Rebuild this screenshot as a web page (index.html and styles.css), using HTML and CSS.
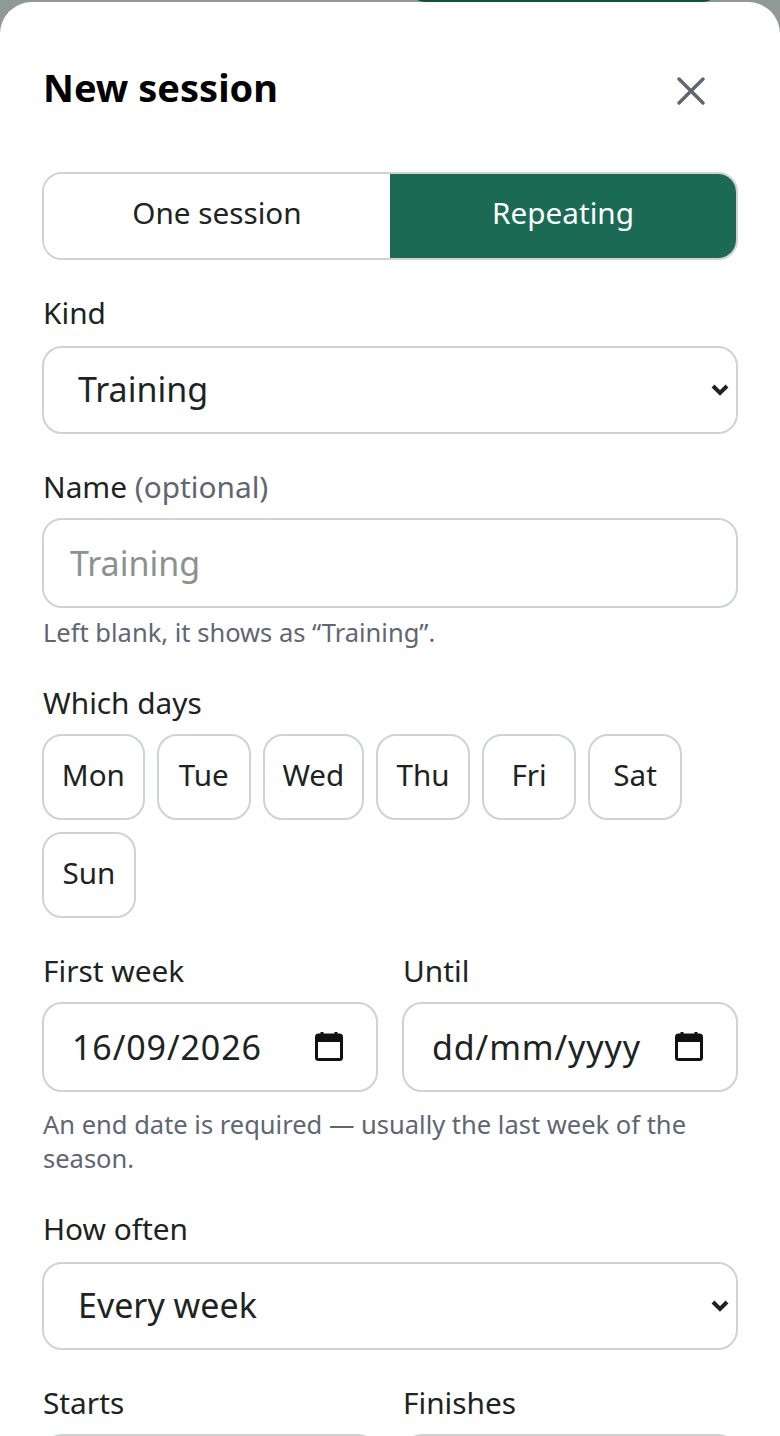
FILE: index.html
```html
<!DOCTYPE html>
<html lang="en">
<head>
    <meta charset="UTF-8">
    <meta name="viewport" content="width=device-width, initial-scale=1.0">
    <title>New session</title>
    <link rel="stylesheet" href="styles.css">
</head>
<body>
    <div class="backdrop">
        <div class="backdrop-btn"></div>
    </div>

    <div class="sheet">
        <div class="sheet-head">
            <h1>New session</h1>
            <button type="button" class="close-btn" aria-label="Close">
                <svg width="28" height="28" viewBox="0 0 28 28"><path d="M2 2 L26 26 M26 2 L2 26" fill="none" stroke="#5f6672" stroke-width="3.4" stroke-linecap="round"/></svg>
            </button>
        </div>

        <div class="segmented">
            <button type="button" class="seg">One session</button>
            <button type="button" class="seg seg-active">Repeating</button>
        </div>

        <div class="field field-kind">
            <label>Kind</label>
            <div class="select-wrap">
                <select class="control select">
                    <option>Training</option>
                </select>
                <svg class="chevron" width="18" height="14" viewBox="0 0 18 14"><path d="M2 3 L9 10 L16 3" fill="none" stroke="#1c2421" stroke-width="4"/></svg>
            </div>
        </div>

        <div class="field field-name">
            <label>Name <span class="muted">(optional)</span></label>
            <input type="text" class="control text-input" placeholder="Training">
            <p class="hint">Left blank, it shows as “Training”.</p>
        </div>

        <div class="field field-days">
            <label>Which days</label>
            <div class="days">
                <button type="button" class="day">Mon</button>
                <button type="button" class="day">Tue</button>
                <button type="button" class="day">Wed</button>
                <button type="button" class="day">Thu</button>
                <button type="button" class="day">Fri</button>
                <button type="button" class="day">Sat</button>
                <button type="button" class="day">Sun</button>
            </div>
        </div>

        <div class="two-col field-dates">
            <div class="field">
                <label>First week</label>
                <div class="date-wrap">
                    <input type="text" class="control date-input" value="16/09/2026">
                    <svg class="cal" width="28" height="30" viewBox="0 0 28 30"><path d="M7 1 V5 M21 1 V5" stroke="#111" stroke-width="3" fill="none"/><rect x="1.5" y="4" width="25" height="24.5" rx="2" fill="none" stroke="#111" stroke-width="3"/><rect x="1.5" y="4" width="25" height="7" fill="#111"/></svg>
                </div>
            </div>
            <div class="field">
                <label>Until</label>
                <div class="date-wrap">
                    <input type="text" class="control date-input" value="dd/mm/yyyy">
                    <svg class="cal" width="28" height="30" viewBox="0 0 28 30"><path d="M7 1 V5 M21 1 V5" stroke="#111" stroke-width="3" fill="none"/><rect x="1.5" y="4" width="25" height="24.5" rx="2" fill="none" stroke="#111" stroke-width="3"/><rect x="1.5" y="4" width="25" height="7" fill="#111"/></svg>
                </div>
            </div>
        </div>
        <p class="hint hint-dates">An end date is required — usually the last week of the season.</p>

        <div class="field field-often">
            <label>How often</label>
            <div class="select-wrap">
                <select class="control select">
                    <option>Every week</option>
                </select>
                <svg class="chevron" width="18" height="14" viewBox="0 0 18 14"><path d="M2 3 L9 10 L16 3" fill="none" stroke="#1c2421" stroke-width="4"/></svg>
            </div>
        </div>

        <div class="two-col field-times">
            <div class="field">
                <label>Starts</label>
                <input type="text" class="control time-input">
            </div>
            <div class="field">
                <label>Finishes</label>
                <input type="text" class="control time-input">
            </div>
        </div>
    </div>
</body>
</html>
```

FILE: styles.css
```css
* {
    margin: 0;
    padding: 0;
    box-sizing: border-box;
    font-family: 'Noto Sans', sans-serif;
}

html, body {
    height: 1436px;
    overflow: hidden;
}

body {
    background-color: #8f9a96;
    color: #1c2421;
    position: relative;
}

.backdrop {
    position: absolute;
    top: 0;
    left: 0;
    right: 0;
    height: 20px;
}

.backdrop-btn {
    position: absolute;
    top: -40px;
    left: 406px;
    width: 316px;
    height: 42px;
    border-radius: 20px;
    background-color: #13503c;
}

.sheet {
    position: relative;
    margin-top: 2px;
    height: 1434px;
    padding: 0 42px;
    background-color: #fff;
    border-radius: 32px 32px 0 0;
    overflow: hidden;
}

.sheet-head {
    display: flex;
    justify-content: space-between;
    align-items: center;
    height: 170px;
}

.sheet-head h1 {
    font-size: 38px;
    font-weight: 700;
    color: #000;
    margin-left: 1px;
}

.close-btn {
    background: none;
    border: none;
    margin-right: 33px;
    margin-top: 8px;
    display: flex;
}

.segmented {
    display: flex;
    height: 88px;
    border: 2px solid #cfd3d1;
    border-radius: 20px;
    overflow: hidden;
}

.seg {
    flex: 1;
    border: none;
    background: #fff;
    color: #1c2421;
    font-size: 29.7px;
    padding-bottom: 8px;
}

.seg-active {
    background-color: #1b6b54;
    color: #fff;
}

.field label {
    display: block;
    font-size: 29.8px;
    line-height: 40px;
    margin-bottom: 13px;
    margin-left: 1px;
}

.muted {
    color: #5f6672;
}

.control {
    display: block;
    width: 100%;
    border: 2px solid #cfd3d1;
    border-radius: 20px;
    background: #fff;
    color: #1c2421;
    outline: none;
}

.select-wrap,
.date-wrap {
    position: relative;
}

.select {
    appearance: none;
    height: 88px;
    padding-left: 34px;
    padding-bottom: 2px;
    font-size: 34px;
}

.chevron {
    position: absolute;
    right: 9px;
    top: 37px;
}

.text-input {
    height: 90px;
    padding-left: 26px;
    font-size: 34px;
}

.text-input::placeholder {
    color: #8b918e;
    opacity: 1;
}

.hint {
    font-size: 25.5px;
    line-height: 34px;
    color: #5f6672;
    margin-left: 1px;
}

.field-name .hint {
    margin-top: 7px;
}

.field-kind {
    margin-top: 33px;
}

.field-name {
    margin-top: 33px;
}

.field-name label {
    margin-bottom: 11px;
}

.field-days {
    margin-top: 34px;
}

.field-days label {
    margin-bottom: 11px;
}

.days {
    display: flex;
    flex-wrap: wrap;
    gap: 12px;
    width: 660px;
}

.day {
    min-width: 94px;
    height: 86px;
    padding: 0 17.8px 6px;
    border: 2px solid #cfd3d1;
    border-radius: 20px;
    background: #fff;
    color: #1c2421;
    font-size: 29.6px;
}

.two-col {
    display: grid;
    grid-template-columns: 1fr 1fr;
    gap: 24px;
}

.field-dates {
    margin-top: 33px;
}

.field-dates label {
    margin-bottom: 11px;
}

.date-input {
    height: 90px;
    padding-left: 28px;
    font-size: 34px;
    letter-spacing: 0.9px;
}

.cal {
    position: absolute;
    right: 35px;
    top: 29px;
}

.hint-dates {
    margin-top: 15px;
}

.field-often {
    margin-top: 34px;
}

.field-often label {
    margin-bottom: 13px;
}

.field-times {
    margin-top: 33px;
}

.field-times label {
    margin-bottom: 11px;
}

.time-input {
    height: 90px;
    background-color: #f4f6f5;
}
```
